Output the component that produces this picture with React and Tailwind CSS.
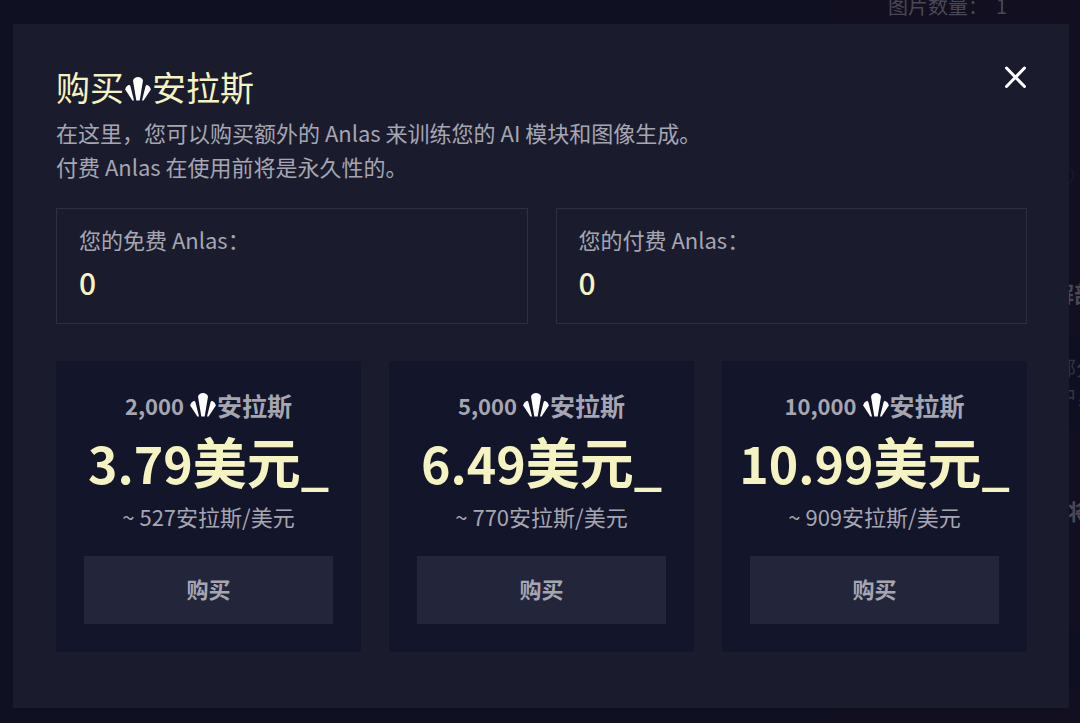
import { useState } from "react";

const balances = [
    { id: "free-anlas", label: "您的免费 Anlas：", value: 0 },
    { id: "paid-anlas", label: "您的付费 Anlas：", value: 0 },
];

const packages = [
    { amount: 2000, price: "3.79", rate: "~ 527安拉斯/美元" },
    { amount: 5000, price: "6.49", rate: "~ 770安拉斯/美元" },
    { amount: 10000, price: "10.99", rate: "~ 909安拉斯/美元" },
];

function AnlasIcon({ className = "" }) {
    return (
        <svg viewBox="0 0 26 24" fill="currentColor" aria-hidden="true" className={`h-6 w-[26px] shrink-0 text-white ${className}`}>
            <path d="M13 0C15.3 0 17.4 1.4 18 3.4L14.7 23.4H11.3L8 3.4C8.6 1.4 10.7 0 13 0Z" />
            <path d="M4.2 7.8L5.4 9L9 23.4H7.4L0.2 12.4C0.7 10.3 2.2 8.7 4.2 7.8Z" />
            <path d="M21.8 7.8L20.6 9L17 23.4H18.6L25.8 12.4C25.3 10.3 23.8 8.7 21.8 7.8Z" />
        </svg>
    );
}

function BalanceBox({ id, label, value }) {
    return (
        <div className="h-29 border border-[#2e3042] px-[22px] pt-3.5">
            <label htmlFor={id} className="block text-[22px] leading-8">
                {label}
            </label>
            <output id={id} className="block text-[30px] leading-[54px] font-medium text-[#f5f3c2]">
                {value}
            </output>
        </div>
    );
}

function PackageCard({ amount, price, rate }) {
    return (
        <article className="flex flex-col items-center bg-[#13152a] px-7 pt-[26px] pb-7 text-center">
            <h3 className="flex items-center text-[25px] leading-9 font-bold">
                <span className="mr-1.5 text-[22px]">{amount.toLocaleString("en-US")}</span>
                <AnlasIcon className="mr-px" />
                安拉斯
            </h3>
            <p className="text-[50px] leading-[75px] font-bold whitespace-nowrap text-[#f5f3c2]">
                {price}
                <span className="text-[54px]">美元</span>_
            </p>
            <p className="text-[22px] leading-8">{rate}</p>
            <button type="button" className="mt-6 h-17 w-full bg-[#23253b] pb-1 text-[22px] font-bold">
                购买
            </button>
        </article>
    );
}

// Settings column that shows dimly around the dialog
function SettingsPanel() {
    return (
        <aside aria-hidden="true" className="flex h-full w-62 flex-col bg-[#110f20] whitespace-nowrap text-[#4a4855]">
            <p className="flex h-[18px] items-end gap-2 pl-14 text-[20px] leading-6">
                <span>图片数量：</span>
                <span>1</span>
            </p>
            <p className="mt-36 pl-56 text-[18px] leading-6 text-[#252332]">ⓘ</p>
            <p className="mt-[94px] pl-55 text-[22px] leading-6 font-bold">解部</p>
            <div className="mt-8 h-[94px] bg-[#0e0f20] pt-[18px] pl-56 text-[20px] leading-7 text-[#353542]">
                <p>部分</p>
                <p>中，</p>
            </div>
            <p className="mt-17 pl-59 text-[22px] leading-6 font-bold">将</p>
            <div className="mt-27 h-[58px] bg-[#0e0f20]" />
        </aside>
    );
}

export default function App() {
    const [open, setOpen] = useState(true);

    return (
        <div className="relative flex h-screen justify-end overflow-hidden bg-[#0f1021] font-['Noto_Sans_CJK_SC',sans-serif]">
            <SettingsPanel />
            {open && (
                <div className="absolute inset-0 flex items-start justify-center pt-6 pr-[11px] pl-[13px]">
                    <section
                        role="dialog"
                        aria-modal="true"
                        aria-labelledby="buy-title"
                        className="w-full bg-[#1a1c2e] pt-[39px] pr-[42px] pb-14 pl-[43px] text-[#a6a6b2]"
                    >
                        <header className="flex items-start justify-between">
                            <div>
                                <h2 id="buy-title" className="flex items-center text-[34px] leading-12 text-[#f5f3c2]">
                                    购买
                                    <AnlasIcon className="mx-px mt-1" />
                                    安拉斯
                                </h2>
                                <p className="mt-1 text-[22px] leading-[34px]">
                                    在这里，您可以购买额外的 Anlas 来训练您的 AI 模块和图像生成。
                                    <br />
                                    付费 Anlas 在使用前将是永久性的。
                                </p>
                            </div>
                            <button type="button" aria-label="关闭" onClick={() => setOpen(false)} className="mt-[3px] text-white">
                                <svg viewBox="0 0 22 22" fill="none" stroke="currentColor" strokeWidth="3" strokeLinecap="round" className="size-[22px]">
                                    <path d="M1.5 2L19.5 20.5M19.5 2L1.5 20.5" />
                                </svg>
                            </button>
                        </header>

                        <div className="mt-[25px] grid grid-cols-2 gap-7">
                            {balances.map((balance) => (
                                <BalanceBox key={balance.id} {...balance} />
                            ))}
                        </div>

                        <div className="mt-[37px] grid grid-cols-3 gap-7">
                            {packages.map((item) => (
                                <PackageCard key={item.amount} {...item} />
                            ))}
                        </div>
                    </section>
                </div>
            )}
        </div>
    );
}
